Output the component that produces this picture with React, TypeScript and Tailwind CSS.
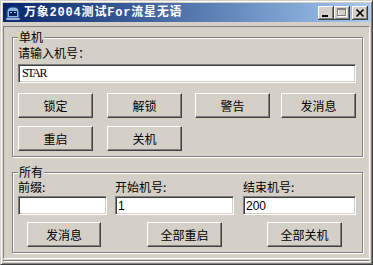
import React from "react";

const raised =
  "bg-[#d4d0c8] border border-t-white border-l-white border-r-[#404040] border-b-[#404040] shadow-[inset_-1px_-1px_0_#808080]";
const sunken =
  "bg-white border border-t-[#808080] border-l-[#808080] border-r-white border-b-white shadow-[inset_1px_1px_0_#404040,inset_-1px_-1px_0_#d4d0c8]";
const capBtn =
  "w-[16px] h-[14px] bg-[#d4d0c8] shadow-[inset_-1px_-1px_0_#404040,inset_1px_1px_0_#fff,inset_-2px_-2px_0_#808080]";

function Btn({ label, className = "" }: { label: string; className?: string }) {
  return (
    <button
      className={`h-[25px] shrink-0 flex items-center justify-center text-[12px] leading-[12px] text-black ${raised} ${className}`}
    >
      {label}
    </button>
  );
}

function Field({ value, className = "", font = "" }: { value: string; className?: string; font?: string }) {
  return (
    <input
      readOnly
      value={value}
      className={`h-[19px] shrink-0 px-[2px] text-[12px] leading-[15px] text-black outline-none ${sunken} ${font} ${className}`}
    />
  );
}

function Group({ title, className = "", children }: { title: string; className?: string; children: React.ReactNode }) {
  return (
    <div className={`relative shrink-0 border border-[#808080] shadow-[inset_1px_1px_0_#fff,1px_1px_0_#fff] ${className}`}>
      <span className="absolute -top-[7px] left-[5px] bg-[#d4d0c8] px-[1px] leading-[12px]">{title}</span>
      {children}
    </div>
  );
}

function TitleBar() {
  return (
    <div className="h-[19px] shrink-0 flex items-center bg-gradient-to-r from-[#0a246a] to-[#a6caf0] pl-[2px] pr-[2px]">
      <svg width="16" height="16" viewBox="0 0 16 16" className="shrink-0">
        <path d="M2 13 L2 7 Q2 2 8 2 Q14 2 14 7 L14 13 Z" fill="#8fb4e0" stroke="#1c3f8a" />
        <rect x="4" y="6" width="8" height="5" fill="#0b1f5c" />
        <rect x="5" y="7" width="2" height="1" fill="#7fd0ff" />
        <rect x="9" y="7" width="2" height="1" fill="#7fd0ff" />
        <rect x="1" y="13" width="14" height="2" fill="#d8e4f4" stroke="#1c3f8a" strokeWidth="0.6" />
      </svg>
      <span className="ml-[3px] font-['Liberation_Mono','Noto_Sans_CJK_SC',monospace] font-bold text-[12px] leading-[14px] tracking-[0.8px] text-white whitespace-nowrap">
        万象2004测试For流星无语
      </span>
      <div className="ml-auto flex items-center">
        <div className={capBtn + " relative"}>
          <svg width="16" height="14" className="absolute inset-0">
            <rect x="4" y="9" width="6" height="2" fill="#000" />
          </svg>
        </div>
        <div className={capBtn + " relative"}>
          <svg width="16" height="14" className="absolute inset-0">
            <g transform="translate(1 1)">
              <rect x="3.5" y="2.5" width="8" height="7" fill="none" stroke="#fff" />
              <rect x="3" y="2" width="9" height="1" fill="#fff" />
            </g>
            <rect x="3.5" y="2.5" width="8" height="7" fill="none" stroke="#808080" />
            <rect x="3" y="2" width="9" height="2" fill="#808080" />
          </svg>
        </div>
        <div className={capBtn + " relative ml-[2px]"}>
          <svg width="16" height="14" className="absolute inset-0">
            <path d="M4.5 3.5 L11.5 10.5 M11.5 3.5 L4.5 10.5" stroke="#000" strokeWidth="1.6" />
          </svg>
        </div>
      </div>
    </div>
  );
}

export default function App() {
  return (
    <div className="w-[373px] h-[265px] overflow-hidden bg-[#d4d0c8] border border-t-[#d4d0c8] border-l-[#d4d0c8] border-r-[#404040] border-b-[#404040] shadow-[inset_1px_1px_0_#fff,inset_-1px_-1px_0_#808080] p-[2px] flex flex-col font-['Noto_Sans_CJK_SC',sans-serif] text-[12px] text-black">
      <TitleBar />
      <div className="mt-[4px] h-[233px] shrink-0 border border-t-[#808080] border-l-[#808080] border-r-white border-b-white pl-[8px] pt-[10px] flex flex-col">
        <Group title="单机" className="w-[351px] h-[120px] pl-[5px] pt-[9px] flex flex-col">
          <div className="h-[12px] leading-[12px]">请输入机号：</div>
          <Field
            value="STAR"
            className="mt-[5px] w-[338px]"
            font="font-['Liberation_Serif',serif] tracking-[-1.4px] pl-[3px]"
          />
          <div className="mt-[10px] flex">
            <Btn label="锁定" className="w-[75px]" />
            <Btn label="解锁" className="ml-[14px] w-[75px]" />
            <Btn label="警告" className="ml-[13px] w-[75px]" />
            <Btn label="发消息" className="ml-[11px] w-[75px]" />
          </div>
          <div className="mt-[8px] flex">
            <Btn label="重启" className="w-[75px]" />
            <Btn label="关机" className="ml-[14px] w-[75px]" />
          </div>
        </Group>
        <Group title="所有" className="mt-[15px] w-[351px] h-[81px] pl-[5px] pt-[8px] flex flex-col">
          <div className="flex">
            <div className="w-[89px] flex flex-col">
              <div className="h-[12px] leading-[12px]">前缀:</div>
              <Field value="" className="mt-[3px] w-full" />
            </div>
            <div className="ml-[8px] w-[119px] flex flex-col">
              <div className="h-[12px] leading-[12px]">开始机号:</div>
              <Field value="1" className="mt-[3px] w-full" font="font-['Liberation_Sans',sans-serif]" />
            </div>
            <div className="ml-[9px] w-[113px] flex flex-col">
              <div className="h-[12px] leading-[12px]">结束机号:</div>
              <Field value="200" className="mt-[3px] w-full" font="font-['Liberation_Sans',sans-serif]" />
            </div>
          </div>
          <div className="mt-[7px] flex">
            <Btn label="发消息" className="ml-[9px] w-[74px]" />
            <Btn label="全部重启" className="ml-[46px] w-[75px]" />
            <Btn label="全部关机" className="ml-[45px] w-[75px]" />
          </div>
        </Group>
      </div>
      <div className="mt-[1px] flex-1 border border-t-[#808080] border-l-[#808080] border-r-white border-b-white" />
    </div>
  );
}
